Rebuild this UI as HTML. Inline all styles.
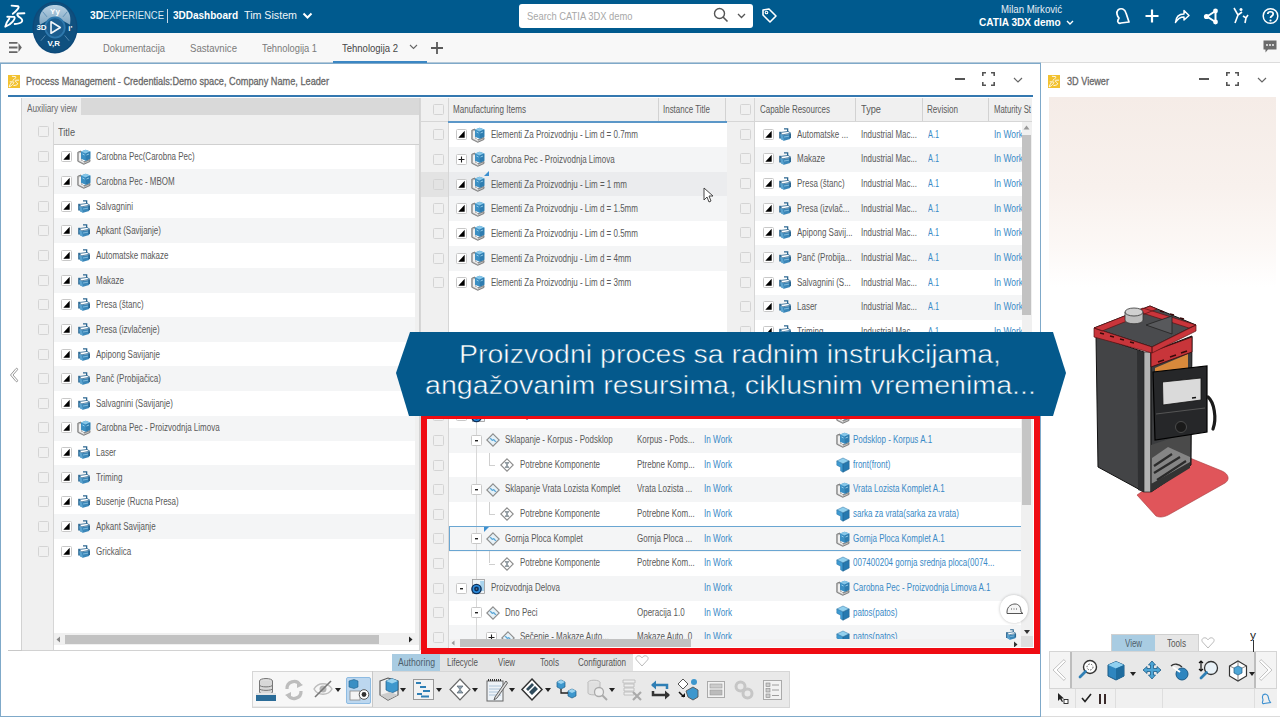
<!DOCTYPE html><html><head><meta charset="utf-8"><style>
html,body{margin:0;padding:0;width:1280px;height:720px;overflow:hidden;background:#fff;position:relative;font-family:"Liberation Sans", sans-serif}
.t{position:absolute;height:20px;line-height:20px;white-space:nowrap;transform-origin:0 50%}
svg{overflow:visible}
</style></head><body>
<svg width="0" height="0" style="position:absolute">
<defs>
<symbol id="prod" viewBox="0 0 14 16">
 <path d="M0.8 3.2 L4 2 L4 11.2 L7 12.8 L13 10.5 L13 12.5 L6.8 15.3 L0.8 12.3Z" fill="#bdbdbd" stroke="#6a6a6a" stroke-width="0.8" stroke-linejoin="round"/>
 <path d="M2 4.5 L2 11.6 L6.8 14 L7 12.8 L4 11.2 L4 3.5Z" fill="#f0f0f0"/>
 <path d="M4 2.6 L8.7 0.8 L13.3 2.6 L13.3 9.8 L8.7 11.8 L4 9.8Z" fill="#3b8fc3"/>
 <path d="M4 2.6 L8.7 4.6 L13.3 2.6 L8.7 0.8Z" fill="#86c6e8"/>
 <path d="M8.7 4.6 L8.7 11.8 L13.3 9.8 L13.3 2.6Z" fill="#2f7db0"/>
 <path d="M5.5 5 L7.5 6 M9.5 6 L12 5" stroke="#a8daf3" stroke-width="0.8"/>
</symbol>
<symbol id="cube" viewBox="0 0 14 16">
 <path d="M0.8 4 L7 1 L13.2 4 L7 7Z" fill="#92d0ee" stroke="#2a73a5" stroke-width="0.5"/>
 <path d="M0.8 4 L7 7 L7 15.2 L4.6 13.8 L4.6 10.2 L0.8 8.2Z" fill="#3f9bd2" stroke="#2a73a5" stroke-width="0.5"/>
 <path d="M7 7 L13.2 4 L13.2 12 L7 15.2Z" fill="#2679b0" stroke="#1f5f8a" stroke-width="0.5"/>
</symbol>
<symbol id="mach" viewBox="0 0 12 13">
 <path d="M5 0.3 H9.3 V4.3 H8 V1.6 H5Z" fill="#2b6690"/>
 <path d="M0.2 3.8 H2.2 V10.5 H0.2Z" fill="#2b6690"/>
 <path d="M1.2 6 L3.8 7.3 L11.8 5.8 L11.2 11 L5 12.8 L2 11.2Z" fill="#3a86b8"/>
 <path d="M3.8 7.3 L5 12.8 L2 11.2 L1.2 6Z" fill="#5ba3cf"/>
 <path d="M1 4.6 L9 3.4 L11.8 5.2 L3.8 6.8Z" fill="#ffffff" stroke="#2b6690" stroke-width="0.8" stroke-linejoin="round"/>
 <path d="M10.4 5.8 H12 V10 H10.4Z" fill="#2b6690"/>
 <path d="M5 9 L10 8.2" stroke="#9fd0ea" stroke-width="0.7"/>
</symbol>
<symbol id="exp" viewBox="0 0 11 11">
 <rect x="0.5" y="0.5" width="10" height="10" rx="1" fill="#fff" stroke="#c8c8c8"/>
 <path d="M2.3 8.7 L8.7 8.7 L8.7 1.8Z" fill="#000"/>
</symbol>
<symbol id="plus" viewBox="0 0 11 11">
 <rect x="0.5" y="0.5" width="10" height="10" rx="1" fill="#fff" stroke="#c8c8c8"/>
 <path d="M2.5 5.5 H8.5 M5.5 2.5 V8.5" stroke="#222" stroke-width="1.1"/>
</symbol>
<symbol id="minus" viewBox="0 0 11 11">
 <rect x="0.5" y="0.5" width="10" height="10" rx="1" fill="#fff" stroke="#c8c8c8"/>
 <rect x="4" y="5" width="3" height="1.4" fill="#222"/>
</symbol>
<symbol id="chk" viewBox="0 0 11 11">
 <rect x="0.5" y="0.5" width="10" height="10" rx="1" fill="none" stroke="#d4d4d4"/>
</symbol>
<symbol id="oper" viewBox="0 0 14 14">
 <path d="M7 0.8 L13.2 7 L7 13.2 L0.8 7Z" fill="#e6f1f7" stroke="#8c8c8c" stroke-width="1.1"/>
 <path d="M4 6 C5 4.5 6 8.5 7 7 C8 5.5 9 9.5 10 8" fill="none" stroke="#5aa6d6" stroke-width="1.3"/>
</symbol>
<symbol id="hour" viewBox="0 0 14 14">
 <path d="M7 0.8 L13.2 7 L7 13.2 L0.8 7Z" fill="#fff" stroke="#8c8c8c" stroke-width="1.1"/>
 <path d="M5 4.5 H9 L7 7 L9 9.5 H5 L7 7Z" fill="#9aa5ad" stroke="#6f7a82" stroke-width="0.6"/>
</symbol>
<symbol id="circ" viewBox="0 0 14 16">
 <rect x="1.5" y="0.5" width="12" height="14" fill="#eef4f8" stroke="#9a9a9a" stroke-width="0.8"/>
 <path d="M9 2 L13 2 L13 12 L10 12Z" fill="#a9d4ee"/>
 <circle cx="5.5" cy="10" r="5.3" fill="#0b2f5a"/>
 <circle cx="5.5" cy="10" r="3.9" fill="#2f8fdf"/>
 <circle cx="5.5" cy="10" r="2.4" fill="#0b2f5a"/>
 <circle cx="5.5" cy="10" r="0.8" fill="#888"/>
</symbol>
</defs></svg><div style="position:absolute;left:0px;top:0px;width:1280px;height:33px;background:#005a8e"></div><svg style="position:absolute;left:0px;top:0px;" width="32" height="32" viewBox="0 0 32 32"><path d="M11.6 5.6 L18.2 6.2 C19.8 7.2 17 10.5 12.8 13.8 M7.3 16.7 L14.3 16.9 C15.8 18.5 11.5 24.5 5.3 26.7 C6 23.5 7.8 20.5 9.3 18.7 M24.4 13.3 L18.2 13.5 C16.3 14.3 17.5 16 20.3 17.8 C24 20.5 22.5 23.5 14.7 24" fill="none" stroke="#fff" stroke-width="1.9" stroke-linecap="round" stroke-linejoin="round"/></svg><div class="t" style="left:90px;top:5.300000000000001px;font-size:11px;color:#ffffff;font-weight:bold;transform:scaleX(0.9245);">3D</div><div class="t" style="left:103px;top:5.300000000000001px;font-size:11px;color:#dbe8f2;font-weight:normal;transform:scaleX(0.8603);">EXPERIENCE</div><div style="position:absolute;left:167px;top:9px;width:1px;height:14px;background:#c5d8e8"></div><div class="t" style="left:173px;top:5.300000000000001px;font-size:11px;color:#ffffff;font-weight:bold;transform:scaleX(0.9089);">3DDashboard</div><div class="t" style="left:244px;top:5.300000000000001px;font-size:11px;color:#eef4f8;font-weight:normal;transform:scaleX(0.9708);">Tim Sistem</div><svg style="position:absolute;left:302px;top:12px;" width="11" height="8" viewBox="0 0 11 8"><path d="M1.5 1.5 L5.5 5.5 L9.5 1.5" fill="none" stroke="#fff" stroke-width="2"/></svg><div style="position:absolute;left:519px;top:4px;width:234px;height:24px;background:#fff;border-radius:3px"></div><div class="t" style="left:527px;top:5.699999999999999px;font-size:11px;color:#a8a8a8;font-weight:normal;transform:scaleX(0.8513);">Search CATIA 3DX demo</div><svg style="position:absolute;left:713px;top:7px;" width="16" height="17" viewBox="0 0 16 17"><circle cx="6.5" cy="6.5" r="5" fill="none" stroke="#555" stroke-width="1.4"/><path d="M10 10 L14.5 14.5" stroke="#555" stroke-width="1.6"/></svg><svg style="position:absolute;left:737px;top:13px;" width="9" height="6" viewBox="0 0 9 6"><path d="M1 1 L4.5 4.5 L8 1" fill="none" stroke="#555" stroke-width="1.3"/></svg><svg style="position:absolute;left:760px;top:7px;" width="18" height="18" viewBox="0 0 18 18"><path d="M3 3 L9 2 L16 9 L10 15 L3 8Z" fill="none" stroke="#fff" stroke-width="1.6" stroke-linejoin="round"/><circle cx="6.5" cy="5.5" r="1.3" fill="none" stroke="#fff" stroke-width="1.1"/></svg><div class="t" style="left:1001px;top:-0.5px;font-size:10px;color:#e6eef5;font-weight:normal;transform:scaleX(0.9631);">Milan Mirković</div><div class="t" style="left:979px;top:11.5px;font-size:11px;color:#ffffff;font-weight:bold;transform:scaleX(0.9148);">CATIA 3DX demo</div><svg style="position:absolute;left:1066px;top:20px;" width="8" height="6" viewBox="0 0 8 6"><path d="M1 1 L4 4 L7 1" fill="none" stroke="#fff" stroke-width="1.4"/></svg><svg style="position:absolute;left:1114px;top:7px;" width="17" height="19" viewBox="0 0 17 19"><path d="M4 3 C7 0.5 11 2 12 6 L14 12 L15 15 L7 16 C5 17 3 15 4 13 L5 11 C3 9 2 5 4 3Z" fill="none" stroke="#fff" stroke-width="1.7" stroke-linejoin="round"/></svg><svg style="position:absolute;left:1145px;top:9px;" width="14" height="14" viewBox="0 0 14 14"><path d="M7 0.5 V13.5 M0.5 7 H13.5" stroke="#fff" stroke-width="2.2"/></svg><svg style="position:absolute;left:1174px;top:8px;" width="16" height="16" viewBox="0 0 16 16"><path d="M1.5 14.5 C2 8 6 6 10 6 L10 2.5 L15 7.5 L10 12 L10 9 C6 9 3.5 11 1.5 14.5Z" fill="none" stroke="#fff" stroke-width="1.5" stroke-linejoin="round"/></svg><svg style="position:absolute;left:1203px;top:8px;" width="17" height="17" viewBox="0 0 17 17"><path d="M4 8.5 L12.5 3 L12.5 14 Z" fill="none" stroke="#fff" stroke-width="2"/><circle cx="3.5" cy="8.5" r="2.6" fill="#fff"/><circle cx="12.5" cy="3" r="2.4" fill="#fff"/><circle cx="12.5" cy="14" r="2.4" fill="#fff"/></svg><svg style="position:absolute;left:1233px;top:7px;" width="16" height="18" viewBox="0 0 16 18"><path d="M1 1 L5 8 L2 16 M9 5 L5 8 M10 9 L13 11 L15 8 M13 11 L12 16" fill="none" stroke="#fff" stroke-width="1.6"/><circle cx="8" cy="2.5" r="1.5" fill="#fff"/></svg><svg style="position:absolute;left:1262px;top:7px;" width="17" height="18" viewBox="0 0 17 18"><circle cx="8.5" cy="9" r="7.3" fill="none" stroke="#fff" stroke-width="1.5"/><path d="M5.8 7 C5.8 4 11.2 4 11.2 7 C11.2 9 8.5 9 8.5 11" fill="none" stroke="#fff" stroke-width="1.7"/><circle cx="8.5" cy="13.5" r="1.1" fill="#fff"/></svg><div style="position:absolute;left:0px;top:33px;width:1280px;height:30px;background:#f8f8f8"></div><div style="position:absolute;left:0px;top:62px;width:1280px;height:2px;background:#b3c8d8"></div><svg style="position:absolute;left:8px;top:41px;" width="14" height="13" viewBox="0 0 14 13"><path d="M1 1.8 H9.5 M1 6.5 H9.5 M1 11.2 H9.5" stroke="#666" stroke-width="1.8"/><path d="M10.5 2 L13.8 6.5 L10.5 11Z" fill="#666"/></svg><div class="t" style="left:103px;top:37.5px;font-size:11px;color:#7b7b7b;font-weight:normal;transform:scaleX(0.8522);">Dokumentacija</div><div class="t" style="left:190px;top:37.5px;font-size:11px;color:#7b7b7b;font-weight:normal;transform:scaleX(0.8735);">Sastavnice</div><div class="t" style="left:262px;top:37.5px;font-size:11px;color:#7b7b7b;font-weight:normal;transform:scaleX(0.8484);">Tehnologija 1</div><div class="t" style="left:342px;top:37.5px;font-size:11px;color:#474747;font-weight:normal;transform:scaleX(0.8638);">Tehnologija 2</div><svg style="position:absolute;left:409px;top:44px;" width="9" height="6" viewBox="0 0 9 6"><path d="M1 1 L4.5 4.5 L8 1" fill="none" stroke="#666" stroke-width="1.1"/></svg><div style="position:absolute;left:333px;top:61px;width:94px;height:2px;background:#3b87c4"></div><svg style="position:absolute;left:431px;top:42px;" width="12" height="12" viewBox="0 0 12 12"><path d="M6 0 V12 M0 6 H12" stroke="#5a5a5a" stroke-width="1.8"/></svg><svg style="position:absolute;left:1263px;top:40px;" width="14" height="14" viewBox="0 0 14 14"><path d="M0.5 0.5 H13.5 V9.5 H5 L2.5 12.5 V9.5 H0.5Z" fill="#6b6b6b"/><circle cx="4" cy="5" r="0.9" fill="#fff"/><circle cx="7" cy="5" r="0.9" fill="#fff"/><circle cx="10" cy="5" r="0.9" fill="#fff"/></svg><svg style="position:absolute;left:32px;top:1px" width="46" height="53" viewBox="0 0 52 60" preserveAspectRatio="none"><ellipse cx="26" cy="30" rx="25.5" ry="29.5" fill="#0d4a7a"/><ellipse cx="26" cy="30" rx="24" ry="28" fill="#0f507f"/><defs><linearGradient id="capg" x1="0" y1="0" x2="0" y2="1"><stop offset="0" stop-color="#b9d1e3"/><stop offset="1" stop-color="#7fa6c2"/></linearGradient></defs><path d="M9 27 C6 11 16 4.5 26 4.5 C36 4.5 46 11 43 27 L36 23 C32 19 20 19 16 23Z" fill="url(#capg)"/><ellipse cx="26" cy="30" rx="11" ry="11.5" fill="#1b5d8f" stroke="#2e78ad" stroke-width="2"/><path d="M21.5 23.5 L32 30 L21.5 36.5Z" fill="none" stroke="#f2f6fa" stroke-width="1.8" stroke-linejoin="round"/><path d="M10 45 L15 39 M42 45 L37 39 M12 12 L17 18 M40 12 L35 18" stroke="#5b8db3" stroke-width="1"/><text x="5" y="33" font-family="Liberation Sans" font-size="9" font-weight="bold" fill="#fff">3D</text><text x="41" y="34" font-family="Liberation Sans" font-size="9" font-weight="bold" fill="#fff">i'</text><text x="17.5" y="51.5" font-family="Liberation Sans" font-size="9" font-weight="bold" fill="#fff">V,R</text><text x="20.5" y="15" font-family="Liberation Sans" font-size="9" font-weight="bold" fill="#fff">Yy</text></svg><div style="position:absolute;left:0px;top:63px;width:1041px;height:654px;background:#fff;border:1px solid #7fa9c9;box-sizing:border-box"></div><div style="position:absolute;left:8px;top:75px;width:12px;height:13px;background:#f2c12e"></div><svg style="position:absolute;left:8px;top:75px;" width="12" height="13" viewBox="3 3 24 26"><path d="M11.6 5.6 L18.2 6.2 C19.8 7.2 17 10.5 12.8 13.8 M7.3 16.7 L14.3 16.9 C15.8 18.5 11.5 24.5 5.3 26.7 C6 23.5 7.8 20.5 9.3 18.7 M24.4 13.3 L18.2 13.5 C16.3 14.3 17.5 16 20.3 17.8 C24 20.5 22.5 23.5 14.7 24" fill="none" stroke="#fff" stroke-width="1.8" stroke-linecap="round" stroke-linejoin="round"/></svg><div class="t" style="left:26px;top:71.0px;font-size:11px;color:#686868;font-weight:normal;transform:scaleX(0.8343);-webkit-text-stroke:0.3px #686868">Process Management - Credentials:Demo space, Company Name, Leader</div><div style="position:absolute;left:955px;top:78px;width:10px;height:2px;background:#555"></div><svg style="position:absolute;left:982px;top:72px;" width="13" height="14" viewBox="0 0 13 14"><path d="M0.8 4 V0.8 H4 M9 0.8 H12.2 V4 M12.2 10 V13.2 H9 M4 13.2 H0.8 V10" fill="none" stroke="#555" stroke-width="1.6"/></svg><svg style="position:absolute;left:1013px;top:77px;" width="10" height="6" viewBox="0 0 10 6"><path d="M1 1 L5 5 L9 1" fill="none" stroke="#666" stroke-width="1.2"/></svg><div style="position:absolute;left:8px;top:95px;width:1025px;height:2px;background:#3478b0"></div><div style="position:absolute;left:21px;top:98px;width:399px;height:553px;background:#fff;border:1px solid #d2d2d2;border-top:none;box-sizing:border-box"></div><div style="position:absolute;left:22px;top:98px;width:397px;height:17px;background:#d9d9d9"></div><div style="position:absolute;left:22px;top:98px;width:59px;height:17px;background:#efefef"></div><div class="t" style="left:27px;top:98.5px;font-size:10px;color:#6a6a6a;font-weight:normal;transform:scaleX(0.8255);">Auxiliary view</div><div style="position:absolute;left:22px;top:115px;width:397px;height:29px;background:#f0f0f0"></div><div style="position:absolute;left:22px;top:144px;width:397px;height:1px;background:#d0d0d0"></div><div style="position:absolute;left:22px;top:115px;width:32px;height:535px;background:#f0f0f0"></div><div style="position:absolute;left:53px;top:122px;width:1px;height:528px;background:#d6d6d6"></div><svg style="position:absolute;left:38px;top:126px" width="11" height="11"><use href="#chk"/></svg><div class="t" style="left:58px;top:122.5px;font-size:10px;color:#5a5a5a;font-weight:normal;transform:scaleX(0.9179);">Title</div><svg style="position:absolute;left:38px;top:151px" width="11" height="11"><use href="#chk"/></svg><svg style="position:absolute;left:61px;top:151px" width="11" height="11"><use href="#exp"/></svg><svg style="position:absolute;left:77px;top:149px" width="14" height="16"><use href="#prod"/></svg><div class="t" style="left:96px;top:147.325px;font-size:10px;color:#5a5a5a;font-weight:normal;transform:scaleX(0.8000);">Carobna Pec(Carobna Pec)</div><div style="position:absolute;left:54px;top:169px;width:361px;height:25px;background:#f4f5f6"></div><svg style="position:absolute;left:38px;top:176px" width="11" height="11"><use href="#chk"/></svg><svg style="position:absolute;left:61px;top:176px" width="11" height="11"><use href="#exp"/></svg><svg style="position:absolute;left:77px;top:173px" width="14" height="16"><use href="#prod"/></svg><div class="t" style="left:96px;top:171.975px;font-size:10px;color:#5a5a5a;font-weight:normal;transform:scaleX(0.8000);">Carobna Pec - MBOM</div><svg style="position:absolute;left:38px;top:201px" width="11" height="11"><use href="#chk"/></svg><svg style="position:absolute;left:61px;top:201px" width="11" height="11"><use href="#exp"/></svg><svg style="position:absolute;left:78px;top:200px" width="12" height="13"><use href="#mach"/></svg><div class="t" style="left:96px;top:196.625px;font-size:10px;color:#5a5a5a;font-weight:normal;transform:scaleX(0.8000);">Salvagnini</div><div style="position:absolute;left:54px;top:218px;width:361px;height:25px;background:#f4f5f6"></div><svg style="position:absolute;left:38px;top:225px" width="11" height="11"><use href="#chk"/></svg><svg style="position:absolute;left:61px;top:225px" width="11" height="11"><use href="#exp"/></svg><svg style="position:absolute;left:78px;top:224px" width="12" height="13"><use href="#mach"/></svg><div class="t" style="left:96px;top:221.27499999999998px;font-size:10px;color:#5a5a5a;font-weight:normal;transform:scaleX(0.8000);">Apkant (Savijanje)</div><svg style="position:absolute;left:38px;top:250px" width="11" height="11"><use href="#chk"/></svg><svg style="position:absolute;left:61px;top:250px" width="11" height="11"><use href="#exp"/></svg><svg style="position:absolute;left:78px;top:249px" width="12" height="13"><use href="#mach"/></svg><div class="t" style="left:96px;top:245.92499999999998px;font-size:10px;color:#5a5a5a;font-weight:normal;transform:scaleX(0.8000);">Automatske makaze</div><div style="position:absolute;left:54px;top:268px;width:361px;height:25px;background:#f4f5f6"></div><svg style="position:absolute;left:38px;top:275px" width="11" height="11"><use href="#chk"/></svg><svg style="position:absolute;left:61px;top:275px" width="11" height="11"><use href="#exp"/></svg><svg style="position:absolute;left:78px;top:274px" width="12" height="13"><use href="#mach"/></svg><div class="t" style="left:96px;top:270.575px;font-size:10px;color:#5a5a5a;font-weight:normal;transform:scaleX(0.8000);">Makaze</div><svg style="position:absolute;left:38px;top:299px" width="11" height="11"><use href="#chk"/></svg><svg style="position:absolute;left:61px;top:299px" width="11" height="11"><use href="#exp"/></svg><svg style="position:absolute;left:78px;top:298px" width="12" height="13"><use href="#mach"/></svg><div class="t" style="left:96px;top:295.22499999999997px;font-size:10px;color:#5a5a5a;font-weight:normal;transform:scaleX(0.8000);">Presa (štanc)</div><div style="position:absolute;left:54px;top:317px;width:361px;height:25px;background:#f4f5f6"></div><svg style="position:absolute;left:38px;top:324px" width="11" height="11"><use href="#chk"/></svg><svg style="position:absolute;left:61px;top:324px" width="11" height="11"><use href="#exp"/></svg><svg style="position:absolute;left:78px;top:323px" width="12" height="13"><use href="#mach"/></svg><div class="t" style="left:96px;top:319.87499999999994px;font-size:10px;color:#5a5a5a;font-weight:normal;transform:scaleX(0.8000);">Presa (izvlačenje)</div><svg style="position:absolute;left:38px;top:349px" width="11" height="11"><use href="#chk"/></svg><svg style="position:absolute;left:61px;top:349px" width="11" height="11"><use href="#exp"/></svg><svg style="position:absolute;left:78px;top:348px" width="12" height="13"><use href="#mach"/></svg><div class="t" style="left:96px;top:344.525px;font-size:10px;color:#5a5a5a;font-weight:normal;transform:scaleX(0.8000);">Apipong Savijanje</div><div style="position:absolute;left:54px;top:366px;width:361px;height:25px;background:#f4f5f6"></div><svg style="position:absolute;left:38px;top:373px" width="11" height="11"><use href="#chk"/></svg><svg style="position:absolute;left:61px;top:373px" width="11" height="11"><use href="#exp"/></svg><svg style="position:absolute;left:78px;top:372px" width="12" height="13"><use href="#mach"/></svg><div class="t" style="left:96px;top:369.175px;font-size:10px;color:#5a5a5a;font-weight:normal;transform:scaleX(0.8000);">Panč (Probijačica)</div><svg style="position:absolute;left:38px;top:398px" width="11" height="11"><use href="#chk"/></svg><svg style="position:absolute;left:61px;top:398px" width="11" height="11"><use href="#exp"/></svg><svg style="position:absolute;left:78px;top:397px" width="12" height="13"><use href="#mach"/></svg><div class="t" style="left:96px;top:393.825px;font-size:10px;color:#5a5a5a;font-weight:normal;transform:scaleX(0.8000);">Salvagnini (Savijanje)</div><div style="position:absolute;left:54px;top:416px;width:361px;height:25px;background:#f4f5f6"></div><svg style="position:absolute;left:38px;top:422px" width="11" height="11"><use href="#chk"/></svg><svg style="position:absolute;left:61px;top:422px" width="11" height="11"><use href="#exp"/></svg><svg style="position:absolute;left:77px;top:420px" width="14" height="16"><use href="#prod"/></svg><div class="t" style="left:96px;top:418.47499999999997px;font-size:10px;color:#5a5a5a;font-weight:normal;transform:scaleX(0.8000);">Carobna Pec - Proizvodnja Limova</div><svg style="position:absolute;left:38px;top:447px" width="11" height="11"><use href="#chk"/></svg><svg style="position:absolute;left:61px;top:447px" width="11" height="11"><use href="#exp"/></svg><svg style="position:absolute;left:78px;top:446px" width="12" height="13"><use href="#mach"/></svg><div class="t" style="left:96px;top:443.12499999999994px;font-size:10px;color:#5a5a5a;font-weight:normal;transform:scaleX(0.8000);">Laser</div><div style="position:absolute;left:54px;top:465px;width:361px;height:25px;background:#f4f5f6"></div><svg style="position:absolute;left:38px;top:472px" width="11" height="11"><use href="#chk"/></svg><svg style="position:absolute;left:61px;top:472px" width="11" height="11"><use href="#exp"/></svg><svg style="position:absolute;left:78px;top:471px" width="12" height="13"><use href="#mach"/></svg><div class="t" style="left:96px;top:467.775px;font-size:10px;color:#5a5a5a;font-weight:normal;transform:scaleX(0.8000);">Triming</div><svg style="position:absolute;left:38px;top:496px" width="11" height="11"><use href="#chk"/></svg><svg style="position:absolute;left:61px;top:496px" width="11" height="11"><use href="#exp"/></svg><svg style="position:absolute;left:78px;top:495px" width="12" height="13"><use href="#mach"/></svg><div class="t" style="left:96px;top:492.42499999999995px;font-size:10px;color:#5a5a5a;font-weight:normal;transform:scaleX(0.8000);">Busenje (Rucna Presa)</div><div style="position:absolute;left:54px;top:514px;width:361px;height:25px;background:#f4f5f6"></div><svg style="position:absolute;left:38px;top:521px" width="11" height="11"><use href="#chk"/></svg><svg style="position:absolute;left:61px;top:521px" width="11" height="11"><use href="#exp"/></svg><svg style="position:absolute;left:78px;top:520px" width="12" height="13"><use href="#mach"/></svg><div class="t" style="left:96px;top:517.075px;font-size:10px;color:#5a5a5a;font-weight:normal;transform:scaleX(0.8000);">Apkant Savijanje</div><svg style="position:absolute;left:38px;top:546px" width="11" height="11"><use href="#chk"/></svg><svg style="position:absolute;left:61px;top:546px" width="11" height="11"><use href="#exp"/></svg><svg style="position:absolute;left:78px;top:545px" width="12" height="13"><use href="#mach"/></svg><div class="t" style="left:96px;top:541.725px;font-size:10px;color:#5a5a5a;font-weight:normal;transform:scaleX(0.8000);">Grickalica</div><div style="position:absolute;left:415px;top:145px;width:4px;height:488px;background:#f0f0f0"></div><div style="position:absolute;left:54px;top:633px;width:365px;height:12px;background:#f0f0f0"></div><div style="position:absolute;left:65px;top:635px;width:314px;height:9px;background:#c2c2c2"></div><svg style="position:absolute;left:56px;top:636px;" width="5" height="7" viewBox="0 0 5 7"><path d="M4 0.5 L0.5 3.5 L4 6.5Z" fill="#888"/></svg><svg style="position:absolute;left:408px;top:636px;" width="5" height="7" viewBox="0 0 5 7"><path d="M1 0.5 L4.5 3.5 L1 6.5Z" fill="#222"/></svg><div style="position:absolute;left:8px;top:650px;width:14px;height:1px;background:#c8c8c8"></div><svg style="position:absolute;left:9px;top:367px;" width="10" height="16" viewBox="0 0 10 16"><path d="M7 1.5 C8 0.8 9 1.8 8.5 2.8 L4 8 L8.5 13.2 C9 14.2 8 15.2 7 14.5 L1.5 8Z" fill="#fff" stroke="#9a9a9a" stroke-width="1"/></svg><div style="position:absolute;left:420px;top:98px;width:307px;height:552px;background:#fff"></div><div style="position:absolute;left:420px;top:98px;width:28px;height:552px;background:#f0f0f0"></div><div style="position:absolute;left:420px;top:98px;width:1px;height:552px;background:#d6d6d6"></div><div style="position:absolute;left:448px;top:98px;width:279px;height:24px;background:#f0f0f0"></div><div style="position:absolute;left:448px;top:98px;width:1px;height:552px;background:#d6d6d6"></div><div style="position:absolute;left:658px;top:98px;width:1px;height:24px;background:#d2d2d2"></div><div style="position:absolute;left:725px;top:98px;width:1px;height:24px;background:#d2d2d2"></div><div style="position:absolute;left:420px;top:121px;width:28px;height:1px;background:#d6d6d6"></div><div style="position:absolute;left:448px;top:121px;width:279px;height:2px;background:#5b97c8"></div><svg style="position:absolute;left:433px;top:104px" width="11" height="11"><use href="#chk"/></svg><div class="t" style="left:453px;top:100.0px;font-size:10px;color:#5a5a5a;font-weight:normal;transform:scaleX(0.8058);">Manufacturing Items</div><div class="t" style="left:663px;top:100.0px;font-size:10px;color:#5a5a5a;font-weight:normal;transform:scaleX(0.7952);">Instance Title</div><svg style="position:absolute;left:433px;top:129px" width="11" height="11"><use href="#chk"/></svg><svg style="position:absolute;left:456px;top:129px" width="11" height="11"><use href="#exp"/></svg><svg style="position:absolute;left:471px;top:127px" width="14" height="16"><use href="#prod"/></svg><div class="t" style="left:491px;top:125.32499999999999px;font-size:10px;color:#5a5a5a;font-weight:normal;transform:scaleX(0.8000);">Elementi Za Proizvodnju - Lim d = 0.7mm</div><div style="position:absolute;left:449px;top:147px;width:278px;height:25px;background:#f4f5f6"></div><svg style="position:absolute;left:433px;top:154px" width="11" height="11"><use href="#chk"/></svg><svg style="position:absolute;left:456px;top:154px" width="11" height="11"><use href="#plus"/></svg><svg style="position:absolute;left:471px;top:151px" width="14" height="16"><use href="#prod"/></svg><div class="t" style="left:491px;top:149.975px;font-size:10px;color:#5a5a5a;font-weight:normal;transform:scaleX(0.8000);">Carobna Pec - Proizvodnja Limova</div><div style="position:absolute;left:421px;top:172px;width:27px;height:25px;background:#e3e3e3"></div><div style="position:absolute;left:449px;top:172px;width:278px;height:25px;background:#ebecee"></div><svg style="position:absolute;left:433px;top:179px" width="11" height="11"><use href="#chk"/></svg><svg style="position:absolute;left:456px;top:179px" width="11" height="11"><use href="#exp"/></svg><svg style="position:absolute;left:471px;top:176px" width="14" height="16"><use href="#prod"/></svg><div class="t" style="left:491px;top:174.625px;font-size:10px;color:#5a5a5a;font-weight:normal;transform:scaleX(0.8000);">Elementi Za Proizvodnju - Lim = 1 mm</div><div style="position:absolute;left:449px;top:196px;width:278px;height:25px;background:#f4f5f6"></div><svg style="position:absolute;left:433px;top:203px" width="11" height="11"><use href="#chk"/></svg><svg style="position:absolute;left:456px;top:203px" width="11" height="11"><use href="#exp"/></svg><svg style="position:absolute;left:471px;top:201px" width="14" height="16"><use href="#prod"/></svg><div class="t" style="left:491px;top:199.27499999999998px;font-size:10px;color:#5a5a5a;font-weight:normal;transform:scaleX(0.8000);">Elementi Za Proizvodnju - Lim d = 1.5mm</div><svg style="position:absolute;left:433px;top:228px" width="11" height="11"><use href="#chk"/></svg><svg style="position:absolute;left:456px;top:228px" width="11" height="11"><use href="#exp"/></svg><svg style="position:absolute;left:471px;top:225px" width="14" height="16"><use href="#prod"/></svg><div class="t" style="left:491px;top:223.92499999999998px;font-size:10px;color:#5a5a5a;font-weight:normal;transform:scaleX(0.8000);">Elementi Za Proizvodnju - Lim d = 0.5mm</div><div style="position:absolute;left:449px;top:246px;width:278px;height:25px;background:#f4f5f6"></div><svg style="position:absolute;left:433px;top:253px" width="11" height="11"><use href="#chk"/></svg><svg style="position:absolute;left:456px;top:253px" width="11" height="11"><use href="#exp"/></svg><svg style="position:absolute;left:471px;top:250px" width="14" height="16"><use href="#prod"/></svg><div class="t" style="left:491px;top:248.575px;font-size:10px;color:#5a5a5a;font-weight:normal;transform:scaleX(0.8000);">Elementi Za Proizvodnju - Lim d = 4mm</div><svg style="position:absolute;left:433px;top:277px" width="11" height="11"><use href="#chk"/></svg><svg style="position:absolute;left:456px;top:277px" width="11" height="11"><use href="#exp"/></svg><svg style="position:absolute;left:471px;top:275px" width="14" height="16"><use href="#prod"/></svg><div class="t" style="left:491px;top:273.22499999999997px;font-size:10px;color:#5a5a5a;font-weight:normal;transform:scaleX(0.8000);">Elementi Za Proizvodnju - Lim d = 3mm</div><svg style="position:absolute;left:484px;top:171px;" width="5" height="5" viewBox="0 0 5 5"><path d="M0 5 L5 0 L5 5Z" fill="#3b8fd0"/></svg><svg style="position:absolute;left:703px;top:187px;" width="10" height="16" viewBox="0 0 10 16"><path d="M1 1 L1 13 L4 10 L6 15 L8 14 L6 9 L10 9Z" fill="#fff" stroke="#333" stroke-width="0.9"/></svg><div style="position:absolute;left:727px;top:98px;width:306px;height:552px;background:#fff"></div><div style="position:absolute;left:727px;top:98px;width:27px;height:552px;background:#f0f0f0"></div><div style="position:absolute;left:754px;top:98px;width:278px;height:23px;background:#f0f0f0"></div><div style="position:absolute;left:727px;top:121px;width:305px;height:1px;background:#d6d6d6"></div><div style="position:absolute;left:754px;top:98px;width:1px;height:552px;background:#d6d6d6"></div><div style="position:absolute;left:855px;top:98px;width:1px;height:23px;background:#d2d2d2"></div><div style="position:absolute;left:922px;top:98px;width:1px;height:23px;background:#d2d2d2"></div><div style="position:absolute;left:988px;top:98px;width:1px;height:23px;background:#d2d2d2"></div><svg style="position:absolute;left:740px;top:104px" width="11" height="11"><use href="#chk"/></svg><div class="t" style="left:760px;top:100.0px;font-size:10px;color:#5a5a5a;font-weight:normal;transform:scaleX(0.7970);">Capable Resources</div><div class="t" style="left:861px;top:100.0px;font-size:10px;color:#5a5a5a;font-weight:normal;transform:scaleX(0.9225);">Type</div><div class="t" style="left:927px;top:100.0px;font-size:10px;color:#5a5a5a;font-weight:normal;transform:scaleX(0.8084);">Revision</div><div class="t" style="left:994px;top:100.0px;font-size:10px;color:#5a5a5a;font-weight:normal;transform:scaleX(0.7743);clip-path:inset(0 0 0 0)">Maturity St</div><svg style="position:absolute;left:740px;top:129px" width="11" height="11"><use href="#chk"/></svg><svg style="position:absolute;left:763px;top:129px" width="11" height="11"><use href="#exp"/></svg><svg style="position:absolute;left:779px;top:128px" width="12" height="13"><use href="#mach"/></svg><div class="t" style="left:797px;top:124.82499999999999px;font-size:10px;color:#5a5a5a;font-weight:normal;transform:scaleX(0.8000);">Automatske ...</div><div class="t" style="left:861px;top:124.82499999999999px;font-size:10px;color:#5a5a5a;font-weight:normal;transform:scaleX(0.7934);">Industrial Mac...</div><div class="t" style="left:928px;top:124.82499999999999px;font-size:10px;color:#3a8ac6;font-weight:normal;transform:scaleX(0.7329);">A.1</div><div class="t" style="left:994px;top:124.82499999999999px;font-size:10px;color:#3a8ac6;font-weight:normal;transform:scaleX(0.8463);">In Work</div><div style="position:absolute;left:755px;top:147px;width:267px;height:25px;background:#f4f5f6"></div><svg style="position:absolute;left:740px;top:153px" width="11" height="11"><use href="#chk"/></svg><svg style="position:absolute;left:763px;top:153px" width="11" height="11"><use href="#exp"/></svg><svg style="position:absolute;left:779px;top:152px" width="12" height="13"><use href="#mach"/></svg><div class="t" style="left:797px;top:149.475px;font-size:10px;color:#5a5a5a;font-weight:normal;transform:scaleX(0.8000);">Makaze</div><div class="t" style="left:861px;top:149.475px;font-size:10px;color:#5a5a5a;font-weight:normal;transform:scaleX(0.7934);">Industrial Mac...</div><div class="t" style="left:928px;top:149.475px;font-size:10px;color:#3a8ac6;font-weight:normal;transform:scaleX(0.7329);">A.1</div><div class="t" style="left:994px;top:149.475px;font-size:10px;color:#3a8ac6;font-weight:normal;transform:scaleX(0.8463);">In Work</div><svg style="position:absolute;left:740px;top:178px" width="11" height="11"><use href="#chk"/></svg><svg style="position:absolute;left:763px;top:178px" width="11" height="11"><use href="#exp"/></svg><svg style="position:absolute;left:779px;top:177px" width="12" height="13"><use href="#mach"/></svg><div class="t" style="left:797px;top:174.125px;font-size:10px;color:#5a5a5a;font-weight:normal;transform:scaleX(0.8000);">Presa (štanc)</div><div class="t" style="left:861px;top:174.125px;font-size:10px;color:#5a5a5a;font-weight:normal;transform:scaleX(0.7934);">Industrial Mac...</div><div class="t" style="left:928px;top:174.125px;font-size:10px;color:#3a8ac6;font-weight:normal;transform:scaleX(0.7329);">A.1</div><div class="t" style="left:994px;top:174.125px;font-size:10px;color:#3a8ac6;font-weight:normal;transform:scaleX(0.8463);">In Work</div><div style="position:absolute;left:755px;top:196px;width:267px;height:25px;background:#f4f5f6"></div><svg style="position:absolute;left:740px;top:203px" width="11" height="11"><use href="#chk"/></svg><svg style="position:absolute;left:763px;top:203px" width="11" height="11"><use href="#exp"/></svg><svg style="position:absolute;left:779px;top:202px" width="12" height="13"><use href="#mach"/></svg><div class="t" style="left:797px;top:198.77499999999998px;font-size:10px;color:#5a5a5a;font-weight:normal;transform:scaleX(0.8000);">Presa (izvlač...</div><div class="t" style="left:861px;top:198.77499999999998px;font-size:10px;color:#5a5a5a;font-weight:normal;transform:scaleX(0.7934);">Industrial Mac...</div><div class="t" style="left:928px;top:198.77499999999998px;font-size:10px;color:#3a8ac6;font-weight:normal;transform:scaleX(0.7329);">A.1</div><div class="t" style="left:994px;top:198.77499999999998px;font-size:10px;color:#3a8ac6;font-weight:normal;transform:scaleX(0.8463);">In Work</div><svg style="position:absolute;left:740px;top:227px" width="11" height="11"><use href="#chk"/></svg><svg style="position:absolute;left:763px;top:227px" width="11" height="11"><use href="#exp"/></svg><svg style="position:absolute;left:779px;top:226px" width="12" height="13"><use href="#mach"/></svg><div class="t" style="left:797px;top:223.42499999999998px;font-size:10px;color:#5a5a5a;font-weight:normal;transform:scaleX(0.8000);">Apipong Savij...</div><div class="t" style="left:861px;top:223.42499999999998px;font-size:10px;color:#5a5a5a;font-weight:normal;transform:scaleX(0.7934);">Industrial Mac...</div><div class="t" style="left:928px;top:223.42499999999998px;font-size:10px;color:#3a8ac6;font-weight:normal;transform:scaleX(0.7329);">A.1</div><div class="t" style="left:994px;top:223.42499999999998px;font-size:10px;color:#3a8ac6;font-weight:normal;transform:scaleX(0.8463);">In Work</div><div style="position:absolute;left:755px;top:245px;width:267px;height:25px;background:#f4f5f6"></div><svg style="position:absolute;left:740px;top:252px" width="11" height="11"><use href="#chk"/></svg><svg style="position:absolute;left:763px;top:252px" width="11" height="11"><use href="#exp"/></svg><svg style="position:absolute;left:779px;top:251px" width="12" height="13"><use href="#mach"/></svg><div class="t" style="left:797px;top:248.075px;font-size:10px;color:#5a5a5a;font-weight:normal;transform:scaleX(0.8000);">Panč (Probija...</div><div class="t" style="left:861px;top:248.075px;font-size:10px;color:#5a5a5a;font-weight:normal;transform:scaleX(0.7934);">Industrial Mac...</div><div class="t" style="left:928px;top:248.075px;font-size:10px;color:#3a8ac6;font-weight:normal;transform:scaleX(0.7329);">A.1</div><div class="t" style="left:994px;top:248.075px;font-size:10px;color:#3a8ac6;font-weight:normal;transform:scaleX(0.8463);">In Work</div><svg style="position:absolute;left:740px;top:277px" width="11" height="11"><use href="#chk"/></svg><svg style="position:absolute;left:763px;top:277px" width="11" height="11"><use href="#exp"/></svg><svg style="position:absolute;left:779px;top:276px" width="12" height="13"><use href="#mach"/></svg><div class="t" style="left:797px;top:272.72499999999997px;font-size:10px;color:#5a5a5a;font-weight:normal;transform:scaleX(0.8000);">Salvagnini (S...</div><div class="t" style="left:861px;top:272.72499999999997px;font-size:10px;color:#5a5a5a;font-weight:normal;transform:scaleX(0.7934);">Industrial Mac...</div><div class="t" style="left:928px;top:272.72499999999997px;font-size:10px;color:#3a8ac6;font-weight:normal;transform:scaleX(0.7329);">A.1</div><div class="t" style="left:994px;top:272.72499999999997px;font-size:10px;color:#3a8ac6;font-weight:normal;transform:scaleX(0.8463);">In Work</div><div style="position:absolute;left:755px;top:295px;width:267px;height:25px;background:#f4f5f6"></div><svg style="position:absolute;left:740px;top:301px" width="11" height="11"><use href="#chk"/></svg><svg style="position:absolute;left:763px;top:301px" width="11" height="11"><use href="#exp"/></svg><svg style="position:absolute;left:779px;top:300px" width="12" height="13"><use href="#mach"/></svg><div class="t" style="left:797px;top:297.37499999999994px;font-size:10px;color:#5a5a5a;font-weight:normal;transform:scaleX(0.8000);">Laser</div><div class="t" style="left:861px;top:297.37499999999994px;font-size:10px;color:#5a5a5a;font-weight:normal;transform:scaleX(0.7934);">Industrial Mac...</div><div class="t" style="left:928px;top:297.37499999999994px;font-size:10px;color:#3a8ac6;font-weight:normal;transform:scaleX(0.7329);">A.1</div><div class="t" style="left:994px;top:297.37499999999994px;font-size:10px;color:#3a8ac6;font-weight:normal;transform:scaleX(0.8463);">In Work</div><svg style="position:absolute;left:740px;top:326px" width="11" height="11"><use href="#chk"/></svg><svg style="position:absolute;left:763px;top:326px" width="11" height="11"><use href="#exp"/></svg><svg style="position:absolute;left:779px;top:325px" width="12" height="13"><use href="#mach"/></svg><div class="t" style="left:797px;top:322.025px;font-size:10px;color:#5a5a5a;font-weight:normal;transform:scaleX(0.8000);">Triming</div><div class="t" style="left:861px;top:322.025px;font-size:10px;color:#5a5a5a;font-weight:normal;transform:scaleX(0.7934);">Industrial Mac...</div><div class="t" style="left:928px;top:322.025px;font-size:10px;color:#3a8ac6;font-weight:normal;transform:scaleX(0.7329);">A.1</div><div class="t" style="left:994px;top:322.025px;font-size:10px;color:#3a8ac6;font-weight:normal;transform:scaleX(0.8463);">In Work</div><div style="position:absolute;left:1022px;top:122px;width:10px;height:528px;background:#f0f0f0"></div><div style="position:absolute;left:1022px;top:135px;width:9px;height:180px;background:#c2c2c2"></div><svg style="position:absolute;left:1023px;top:125px;" width="7" height="5" viewBox="0 0 7 5"><path d="M0.5 4.5 L3.5 0.5 L6.5 4.5Z" fill="#999"/></svg><div style="position:absolute;left:1032px;top:98px;width:1px;height:552px;background:#fff"></div><div style="position:absolute;left:427px;top:400px;width:607px;height:248px;background:#fff"></div><div style="position:absolute;left:427px;top:400px;width:21px;height:248px;background:#f0f0f0"></div><div style="position:absolute;left:448px;top:400px;width:1px;height:248px;background:#d6d6d6"></div><div style="position:absolute;left:427px;top:419px;width:607px;height:228px;overflow:hidden"><div style="position:absolute;left:0px;top:0px;width:21px;height:228px;background:#f0f0f0"></div><div style="position:absolute;left:21px;top:0px;width:1px;height:228px;background:#d6d6d6"></div><div style="position:absolute;left:22px;top:9px;width:573px;height:25px;background:#f4f5f6"></div><div style="position:absolute;left:22px;top:58px;width:573px;height:25px;background:#f4f5f6"></div><div style="position:absolute;left:22px;top:108px;width:573px;height:25px;background:#f4f5f6"></div><div style="position:absolute;left:22px;top:157px;width:573px;height:25px;background:#f4f5f6"></div><div style="position:absolute;left:22px;top:206px;width:573px;height:25px;background:#f4f5f6"></div><div style="position:absolute;left:49px;top:0px;width:1px;height:160px;background:#d8d8d8"></div><div style="position:absolute;left:49px;top:178px;width:1px;height:50px;background:#d8d8d8"></div><svg style="position:absolute;left:6px;top:-9px" width="11" height="11"><use href="#chk"/></svg><svg style="position:absolute;left:29px;top:-9px" width="11" height="11"><use href="#minus"/></svg><svg style="position:absolute;left:44px;top:-12px" width="14" height="16"><use href="#circ"/></svg><div class="t" style="left:64px;top:-13.575000000000035px;font-size:10px;color:#5a5a5a;font-weight:normal;transform:scaleX(0.8000);">Proizvodnja</div><svg style="position:absolute;left:409px;top:-11px" width="14" height="16"><use href="#prod"/></svg><svg style="position:absolute;left:6px;top:16px" width="11" height="11"><use href="#chk"/></svg><svg style="position:absolute;left:44px;top:16px" width="11" height="11"><use href="#minus"/></svg><svg style="position:absolute;left:59px;top:14px" width="14" height="14"><use href="#oper"/></svg><div class="t" style="left:78px;top:11.074999999999942px;font-size:10px;color:#5a5a5a;font-weight:normal;transform:scaleX(0.8000);">Sklapanje - Korpus - Podsklop</div><div class="t" style="left:210px;top:11.074999999999942px;font-size:10px;color:#5a5a5a;font-weight:normal;transform:scaleX(0.8000);">Korpus - Pods...</div><div class="t" style="left:277px;top:11.074999999999942px;font-size:10px;color:#3a8ac6;font-weight:normal;transform:scaleX(0.8171);">In Work</div><svg style="position:absolute;left:409px;top:13px" width="14" height="16"><use href="#prod"/></svg><div class="t" style="left:426px;top:11.074999999999942px;font-size:10px;color:#3a8ac6;font-weight:normal;transform:scaleX(0.8000);">Podsklop - Korpus A.1</div><svg style="position:absolute;left:6px;top:41px" width="11" height="11"><use href="#chk"/></svg><div style="position:absolute;left:62px;top:34px;width:1px;height:12px;background:#cfcfcf"></div><div style="position:absolute;left:62px;top:46px;width:6px;height:1px;background:#cfcfcf"></div><svg style="position:absolute;left:73px;top:39px" width="14" height="14"><use href="#hour"/></svg><div class="t" style="left:93px;top:35.72499999999998px;font-size:10px;color:#5a5a5a;font-weight:normal;transform:scaleX(0.8000);">Potrebne Komponente</div><div class="t" style="left:210px;top:35.72499999999998px;font-size:10px;color:#5a5a5a;font-weight:normal;transform:scaleX(0.8000);">Ptrebne Komp...</div><div class="t" style="left:277px;top:35.72499999999998px;font-size:10px;color:#3a8ac6;font-weight:normal;transform:scaleX(0.8171);">In Work</div><svg style="position:absolute;left:409px;top:38px" width="14" height="16"><use href="#cube"/></svg><div class="t" style="left:426px;top:35.72499999999998px;font-size:10px;color:#3a8ac6;font-weight:normal;transform:scaleX(0.8000);">front(front)</div><svg style="position:absolute;left:6px;top:65px" width="11" height="11"><use href="#chk"/></svg><svg style="position:absolute;left:44px;top:65px" width="11" height="11"><use href="#minus"/></svg><svg style="position:absolute;left:59px;top:64px" width="14" height="14"><use href="#oper"/></svg><div class="t" style="left:78px;top:60.37499999999996px;font-size:10px;color:#5a5a5a;font-weight:normal;transform:scaleX(0.8000);">Sklapanje Vrata Lozista Komplet</div><div class="t" style="left:210px;top:60.37499999999996px;font-size:10px;color:#5a5a5a;font-weight:normal;transform:scaleX(0.8000);">Vrata Lozista ...</div><div class="t" style="left:277px;top:60.37499999999996px;font-size:10px;color:#3a8ac6;font-weight:normal;transform:scaleX(0.8171);">In Work</div><svg style="position:absolute;left:409px;top:63px" width="14" height="16"><use href="#prod"/></svg><div class="t" style="left:426px;top:60.37499999999996px;font-size:10px;color:#3a8ac6;font-weight:normal;transform:scaleX(0.8000);">Vrata Lozista Komplet A.1</div><svg style="position:absolute;left:6px;top:90px" width="11" height="11"><use href="#chk"/></svg><div style="position:absolute;left:62px;top:83px;width:1px;height:12px;background:#cfcfcf"></div><div style="position:absolute;left:62px;top:95px;width:6px;height:1px;background:#cfcfcf"></div><svg style="position:absolute;left:73px;top:88px" width="14" height="14"><use href="#hour"/></svg><div class="t" style="left:93px;top:85.02500000000005px;font-size:10px;color:#5a5a5a;font-weight:normal;transform:scaleX(0.8000);">Potrebne Komponente</div><div class="t" style="left:210px;top:85.02500000000005px;font-size:10px;color:#5a5a5a;font-weight:normal;transform:scaleX(0.8000);">Potrebne Kom...</div><div class="t" style="left:277px;top:85.02500000000005px;font-size:10px;color:#3a8ac6;font-weight:normal;transform:scaleX(0.8171);">In Work</div><svg style="position:absolute;left:409px;top:87px" width="14" height="16"><use href="#cube"/></svg><div class="t" style="left:426px;top:85.02500000000005px;font-size:10px;color:#3a8ac6;font-weight:normal;transform:scaleX(0.8000);">sarka za vrata(sarka za vrata)</div><svg style="position:absolute;left:6px;top:114px" width="11" height="11"><use href="#chk"/></svg><svg style="position:absolute;left:44px;top:114px" width="11" height="11"><use href="#minus"/></svg><svg style="position:absolute;left:59px;top:113px" width="14" height="14"><use href="#oper"/></svg><div class="t" style="left:78px;top:109.67500000000003px;font-size:10px;color:#5a5a5a;font-weight:normal;transform:scaleX(0.8000);">Gornja Ploca Komplet</div><div class="t" style="left:210px;top:109.67500000000003px;font-size:10px;color:#5a5a5a;font-weight:normal;transform:scaleX(0.8000);">Gornja Ploca ...</div><div class="t" style="left:277px;top:109.67500000000003px;font-size:10px;color:#3a8ac6;font-weight:normal;transform:scaleX(0.8171);">In Work</div><svg style="position:absolute;left:409px;top:112px" width="14" height="16"><use href="#prod"/></svg><div class="t" style="left:426px;top:109.67500000000003px;font-size:10px;color:#3a8ac6;font-weight:normal;transform:scaleX(0.8000);">Gornja Ploca Komplet A.1</div><svg style="position:absolute;left:6px;top:139px" width="11" height="11"><use href="#chk"/></svg><div style="position:absolute;left:62px;top:132px;width:1px;height:12px;background:#cfcfcf"></div><div style="position:absolute;left:62px;top:145px;width:6px;height:1px;background:#cfcfcf"></div><svg style="position:absolute;left:73px;top:138px" width="14" height="14"><use href="#hour"/></svg><div class="t" style="left:93px;top:134.325px;font-size:10px;color:#5a5a5a;font-weight:normal;transform:scaleX(0.8000);">Potrebne Komponente</div><div class="t" style="left:210px;top:134.325px;font-size:10px;color:#5a5a5a;font-weight:normal;transform:scaleX(0.8000);">Potrebne Kom...</div><div class="t" style="left:277px;top:134.325px;font-size:10px;color:#3a8ac6;font-weight:normal;transform:scaleX(0.8171);">In Work</div><svg style="position:absolute;left:409px;top:137px" width="14" height="16"><use href="#cube"/></svg><div class="t" style="left:426px;top:134.325px;font-size:10px;color:#3a8ac6;font-weight:normal;transform:scaleX(0.8000);">007400204 gornja srednja ploca(0074...</div><svg style="position:absolute;left:6px;top:164px" width="11" height="11"><use href="#chk"/></svg><svg style="position:absolute;left:29px;top:164px" width="11" height="11"><use href="#minus"/></svg><svg style="position:absolute;left:44px;top:160px" width="14" height="16"><use href="#circ"/></svg><div class="t" style="left:64px;top:158.97499999999997px;font-size:10px;color:#5a5a5a;font-weight:normal;transform:scaleX(0.8000);">Proizvodnja Delova</div><div class="t" style="left:277px;top:158.97499999999997px;font-size:10px;color:#3a8ac6;font-weight:normal;transform:scaleX(0.8171);">In Work</div><svg style="position:absolute;left:409px;top:161px" width="14" height="16"><use href="#prod"/></svg><div class="t" style="left:426px;top:158.97499999999997px;font-size:10px;color:#3a8ac6;font-weight:normal;transform:scaleX(0.8000);">Carobna Pec - Proizvodnja Limova A.1</div><svg style="position:absolute;left:6px;top:188px" width="11" height="11"><use href="#chk"/></svg><svg style="position:absolute;left:44px;top:188px" width="11" height="11"><use href="#minus"/></svg><svg style="position:absolute;left:59px;top:187px" width="14" height="14"><use href="#oper"/></svg><div class="t" style="left:78px;top:183.62499999999994px;font-size:10px;color:#5a5a5a;font-weight:normal;transform:scaleX(0.8000);">Dno Peci</div><div class="t" style="left:210px;top:183.62499999999994px;font-size:10px;color:#5a5a5a;font-weight:normal;transform:scaleX(0.8000);">Operacija 1.0</div><div class="t" style="left:277px;top:183.62499999999994px;font-size:10px;color:#3a8ac6;font-weight:normal;transform:scaleX(0.8171);">In Work</div><svg style="position:absolute;left:409px;top:186px" width="14" height="16"><use href="#cube"/></svg><div class="t" style="left:426px;top:183.62499999999994px;font-size:10px;color:#3a8ac6;font-weight:normal;transform:scaleX(0.8000);">patos(patos)</div><svg style="position:absolute;left:6px;top:213px" width="11" height="11"><use href="#chk"/></svg><svg style="position:absolute;left:59px;top:213px" width="11" height="11"><use href="#plus"/></svg><svg style="position:absolute;left:74px;top:212px" width="14" height="14"><use href="#oper"/></svg><div class="t" style="left:93px;top:208.27500000000003px;font-size:10px;color:#5a5a5a;font-weight:normal;transform:scaleX(0.8000);">Sečenje - Makaze Auto...</div><div class="t" style="left:210px;top:208.27500000000003px;font-size:10px;color:#5a5a5a;font-weight:normal;transform:scaleX(0.8000);">Makaze Auto..0</div><div class="t" style="left:277px;top:208.27500000000003px;font-size:10px;color:#3a8ac6;font-weight:normal;transform:scaleX(0.8171);">In Work</div><svg style="position:absolute;left:409px;top:211px" width="14" height="16"><use href="#cube"/></svg><div class="t" style="left:426px;top:208.27500000000003px;font-size:10px;color:#3a8ac6;font-weight:normal;transform:scaleX(0.8000);">patos(patos)</div><div style="position:absolute;left:22px;top:107px;width:573px;height:1px;background:#6aa6d2"></div><div style="position:absolute;left:22px;top:131px;width:573px;height:1px;background:#6aa6d2"></div><div style="position:absolute;left:22px;top:107px;width:1px;height:25px;background:#6aa6d2"></div><svg style="position:absolute;left:57px;top:108px;" width="5" height="5" viewBox="0 0 5 5"><path d="M0 5 L0 0 L5 0Z" fill="#3b8fd0"/></svg><div style="position:absolute;left:594px;top:0px;width:12px;height:228px;background:#f0f0f0"></div><div style="position:absolute;left:595px;top:0px;width:9px;height:86px;background:#c5c5c5"></div><div style="position:absolute;left:22px;top:220px;width:573px;height:8px;background:#f2f2f2"></div><div style="position:absolute;left:33px;top:220px;width:231px;height:8px;background:#c2c2c2"></div><svg style="position:absolute;left:24px;top:221px;" width="4" height="6" viewBox="0 0 4 6"><path d="M3.5 0.5 L0.5 3 L3.5 5.5Z" fill="#999"/></svg><svg style="position:absolute;left:586px;top:222px;" width="5" height="7" viewBox="0 0 5 7"><path d="M1 0.5 L4.5 3.5 L1 6.5Z" fill="#333"/></svg><div style="position:absolute;left:594px;top:217px;width:12px;height:11px;background:#dedede"></div><div style="position:absolute;left:573px;top:176px;width:28px;height:28px;border-radius:50%;background:#fff;box-shadow:0 0 3px rgba(0,0,0,.25)"></div><svg style="position:absolute;left:577px;top:183px;" width="20" height="14" viewBox="0 0 20 14"><path d="M3 10 C3 4 8 2 11 2 C15 2 17 5 17 10 L19 11.5 L3 11.5Z" fill="#f6f6f6" stroke="#555" stroke-width="1"/><path d="M7 7 h1 M9.5 7 h1 M12 7 h1" stroke="#555" stroke-width="1"/></svg><svg style="position:absolute;left:578px;top:210px" width="12" height="11"><use href="#mach"/></svg><svg style="position:absolute;left:597px;top:211px;" width="6" height="4" viewBox="0 0 6 4"><path d="M0 0 H6 L3 4Z" fill="#333"/></svg></div><div style="position:absolute;left:421px;top:413px;width:619px;height:241px;border:6px solid #ef0b12;box-sizing:border-box"></div><div style="position:absolute;left:392px;top:654px;width:241px;height:17px;background:#e4e4e4;border-top:1px solid #d8d8d8;box-sizing:border-box"></div><div style="position:absolute;left:392px;top:654px;width:48px;height:17px;background:#a9cce2"></div><div class="t" style="left:398px;top:653.0px;font-size:10px;color:#4d5f6d;font-weight:normal;transform:scaleX(0.8643);">Authoring</div><div class="t" style="left:447px;top:653.0px;font-size:10px;color:#555;font-weight:normal;transform:scaleX(0.7968);">Lifecycle</div><div class="t" style="left:498px;top:653.0px;font-size:10px;color:#555;font-weight:normal;transform:scaleX(0.7909);">View</div><div class="t" style="left:540px;top:653.0px;font-size:10px;color:#555;font-weight:normal;transform:scaleX(0.8139);">Tools</div><div class="t" style="left:578px;top:653.0px;font-size:10px;color:#555;font-weight:normal;transform:scaleX(0.8070);">Configuration</div><svg style="position:absolute;left:635px;top:655px;" width="14" height="12" viewBox="0 0 14 12"><path d="M7 11 L1.5 5 C0 3 1.5 0.8 3.8 0.8 C5.5 0.8 6.5 2 7 3 C7.5 2 8.5 0.8 10.2 0.8 C12.5 0.8 14 3 12.5 5Z" fill="#fff" stroke="#bbb" stroke-width="1"/></svg><div style="position:absolute;left:252px;top:671px;width:538px;height:37px;background:#e9e9e9;border:1px solid #d6d6d6;box-sizing:border-box"></div><div style="position:absolute;left:253px;top:672px;width:119px;height:34px;background:#f7f7f7"></div><div style="position:absolute;left:372px;top:671px;width:1px;height:36px;background:#c8c8c8"></div><svg style="position:absolute;left:255px;top:677px;" width="22" height="26" viewBox="0 0 22 26"><ellipse cx="11" cy="4" rx="6.5" ry="2.5" fill="#ddd" stroke="#777"/><path d="M4.5 4 V15 C4.5 18 17.5 18 17.5 15 V4" fill="#d8d8d8" stroke="#777"/><path d="M4.5 8 C4.5 10.5 17.5 10.5 17.5 8 M4.5 11.5 C4.5 14 17.5 14 17.5 11.5" fill="none" stroke="#777"/><path d="M1 16 H21 V24 H1Z" fill="#2b6c98"/><path d="M1 16 H21 V18 H1Z" fill="#e6e6e6"/></svg><svg style="position:absolute;left:284px;top:679px;" width="20" height="22" viewBox="0 0 20 22"><path d="M3 10 A7 7 0 0 1 16 6 M17 12 A7 7 0 0 1 4 16" fill="none" stroke="#bdbdbd" stroke-width="3.2"/><path d="M13 2 L19 6 L13 9Z M7 13 L1 16 L7 20Z" fill="#bdbdbd"/></svg><svg style="position:absolute;left:313px;top:679px;" width="20" height="20" viewBox="0 0 20 20"><path d="M1 10 C5 3 15 3 19 10 C15 17 5 17 1 10Z" fill="none" stroke="#bdbdbd" stroke-width="1.5"/><circle cx="10" cy="10" r="3.5" fill="#b5b5b5"/><path d="M2 18 L18 2" stroke="#777" stroke-width="1.6"/></svg><svg style="position:absolute;left:335px;top:688px;" width="6" height="4" viewBox="0 0 6 4"><path d="M0 0 H6 L3 4Z" fill="#222"/></svg><div style="position:absolute;left:346px;top:677px;width:25px;height:27px;background:#bcd7ef;border:1px solid #8dbbe2;box-sizing:border-box;border-radius:2px"></div><svg style="position:absolute;left:348px;top:679px;" width="22" height="23" viewBox="0 0 22 23"><path d="M1 2 L6 0.5 L10 2 V8 L6 9.5 L1 8Z" fill="#3a8fc4" stroke="#1f5f8a" stroke-width="0.6"/><rect x="2" y="12" width="10" height="9" fill="#f4f4f4" stroke="#888" stroke-width="0.8"/><circle cx="16" cy="15.5" r="4.8" fill="#fff" stroke="#555"/><circle cx="16" cy="15.5" r="2.4" fill="#333"/></svg><svg style="position:absolute;left:378px;top:677px;" width="22" height="24" viewBox="0 0 22 24"><path d="M2 4 L10 1 L20 4 V18 L10 23 L2 18Z" fill="#f1f1f1" stroke="#555" stroke-width="1.1"/><path d="M8 4 L14 1.5 L20 4 V13 L14 16 L8 13Z" fill="#3d97cd" stroke="#1c5c86" stroke-width="0.7"/><path d="M8 4 L14 6.5 L20 4 L14 1.5Z" fill="#9bd3ef"/><path d="M2 18 L10 23 L20 18 L12 15Z" fill="#ccc"/></svg><svg style="position:absolute;left:400px;top:688px;" width="6" height="4" viewBox="0 0 6 4"><path d="M0 0 H6 L3 4Z" fill="#222"/></svg><svg style="position:absolute;left:413px;top:679px;" width="21" height="21" viewBox="0 0 21 21"><rect x="0.5" y="0.5" width="20" height="20" fill="#f3f3f3" stroke="#999"/><path d="M3 4 H8 M7 8 H13 M10 12 H17 M4 15 H9 M8 17.5 H16" stroke="#2f7fb5" stroke-width="2"/></svg><svg style="position:absolute;left:436px;top:688px;" width="6" height="4" viewBox="0 0 6 4"><path d="M0 0 H6 L3 4Z" fill="#222"/></svg><svg style="position:absolute;left:449px;top:678px;" width="22" height="23" viewBox="0 0 22 23"><path d="M11 1 L21 11.5 L11 22 L1 11.5Z" fill="#fff" stroke="#666" stroke-width="1.2"/><path d="M8 8 H14 L11 11.5 L14 15 H8 L11 11.5Z" fill="#8fa4b2" stroke="#56636d" stroke-width="0.7"/></svg><svg style="position:absolute;left:472px;top:688px;" width="6" height="4" viewBox="0 0 6 4"><path d="M0 0 H6 L3 4Z" fill="#222"/></svg><svg style="position:absolute;left:486px;top:678px;" width="22" height="24" viewBox="0 0 22 24"><rect x="1" y="3" width="16" height="20" fill="#eef3f8" stroke="#666"/><path d="M3 8 H15 M3 11 H15 M3 14 H15 M3 17 H15" stroke="#9cb8d0" stroke-width="0.8"/><path d="M2 2 H16" stroke="#333" stroke-width="2" stroke-dasharray="1 1"/><path d="M20 3 L9 19 L8 22 L11 20 L21.5 5Z" fill="#ddd" stroke="#555" stroke-width="0.9"/></svg><svg style="position:absolute;left:509px;top:688px;" width="6" height="4" viewBox="0 0 6 4"><path d="M0 0 H6 L3 4Z" fill="#222"/></svg><svg style="position:absolute;left:521px;top:678px;" width="22" height="23" viewBox="0 0 22 23"><path d="M11 1 L21 11.5 L11 22 L1 11.5Z" fill="#fff" stroke="#333" stroke-width="1.5"/><path d="M5 11 L11 5 L13 7 L7 13Z M8 14 L14 8 L17 11 L11 17Z" fill="#2f4b5c"/></svg><svg style="position:absolute;left:545px;top:688px;" width="6" height="4" viewBox="0 0 6 4"><path d="M0 0 H6 L3 4Z" fill="#222"/></svg><svg style="position:absolute;left:556px;top:679px;" width="22" height="22" viewBox="0 0 22 22"><path d="M1 3 L5 1 L9 3 V8 L5 10 L1 8Z" fill="#3d97cd" stroke="#1c5c86" stroke-width="0.7"/><path d="M12 12 L16 10 L20 12 V17 L16 19 L12 17Z" fill="#3d97cd" stroke="#1c5c86" stroke-width="0.7"/><path d="M5 10 V14 H12" fill="none" stroke="#222" stroke-width="1.3"/><path d="M1 3 L5 5 L9 3 L5 1Z M12 12 L16 14 L20 12 L16 10Z" fill="#9bd3ef"/></svg><svg style="position:absolute;left:586px;top:679px;" width="22" height="22" viewBox="0 0 22 22"><ellipse cx="8" cy="3.5" rx="6" ry="2.3" fill="#e5e5e5" stroke="#bbb"/><path d="M2 3.5 V14 C2 16.5 14 16.5 14 14 V3.5" fill="#e0e0e0" stroke="#bbb"/><circle cx="13" cy="13" r="4.5" fill="#eee" stroke="#aaa" stroke-width="1.3"/><path d="M16 16 L21 21" stroke="#aaa" stroke-width="2"/></svg><svg style="position:absolute;left:609px;top:688px;" width="6" height="4" viewBox="0 0 6 4"><path d="M0 0 H6 L3 4Z" fill="#222"/></svg><svg style="position:absolute;left:621px;top:679px;" width="22" height="22" viewBox="0 0 22 22"><path d="M2 1 H14 V4 H2Z M3 5 H13 V8 H3Z M3 9 H13 V12 H3Z M3 13 H13 V16 H3Z" fill="#eee" stroke="#bbb" stroke-width="0.9"/><path d="M12 13 L20 21 M20 13 L12 21" stroke="#aaa" stroke-width="2.2"/></svg><svg style="position:absolute;left:650px;top:680px;" width="21" height="19" viewBox="0 0 21 19"><path d="M2 5 H17 V9" fill="none" stroke="#2f7fb5" stroke-width="2.5"/><path d="M6 0.5 L1 5 L6 9.5Z" fill="#2f7fb5"/><path d="M19 15 H3 V11" fill="none" stroke="#333" stroke-width="2.5"/><path d="M15 10.5 L20 15 L15 19.5Z" fill="#333"/></svg><svg style="position:absolute;left:677px;top:678px;" width="22" height="24" viewBox="0 0 22 24"><path d="M6 1 L11 6 L6 11 L1 6Z" fill="#fff" stroke="#555" stroke-width="1"/><circle cx="17" cy="4" r="3" fill="#3d97cd"/><path d="M9 13 L16 9 L21 12 V19 L16 22 L11 19Z" fill="#3d97cd" stroke="#555" stroke-width="0.9"/><path d="M2 14 L7 19" stroke="#111" stroke-width="1.5"/><path d="M4 19 H8 V15Z" fill="#111"/></svg><svg style="position:absolute;left:707px;top:681px;" width="18" height="17" viewBox="0 0 18 17"><rect x="0.5" y="0.5" width="17" height="16" fill="#f2f2f2" stroke="#aaa"/><rect x="3" y="3" width="12" height="4" fill="#ccc" stroke="#999" stroke-width="0.6"/><rect x="3" y="9" width="12" height="5" fill="#bbb" stroke="#999" stroke-width="0.6"/></svg><svg style="position:absolute;left:734px;top:680px;" width="20" height="20" viewBox="0 0 20 20"><circle cx="6.5" cy="6.5" r="4.5" fill="none" stroke="#c6c6c6" stroke-width="3"/><circle cx="13.5" cy="13.5" r="4.5" fill="none" stroke="#c6c6c6" stroke-width="3"/></svg><svg style="position:absolute;left:763px;top:680px;" width="19" height="20" viewBox="0 0 19 20"><rect x="0.5" y="0.5" width="18" height="19" fill="#f2f2f2" stroke="#aaa"/><rect x="3" y="3" width="4" height="3.5" fill="#ccc" stroke="#888" stroke-width="0.6"/><rect x="3" y="8.5" width="4" height="3.5" fill="#ccc" stroke="#888" stroke-width="0.6"/><rect x="3" y="14" width="4" height="3.5" fill="#ccc" stroke="#888" stroke-width="0.6"/><path d="M9 5 H16 M9 10 H16 M9 15.5 H16" stroke="#888" stroke-width="0.8"/></svg><div style="position:absolute;left:1041px;top:63px;width:239px;height:654px;background:#fff"></div><div style="position:absolute;left:1041px;top:62px;width:239px;height:1px;background:#dcdcdc"></div><div style="position:absolute;left:1041px;top:716px;width:239px;height:1px;background:#dcdcdc"></div><div style="position:absolute;left:1048px;top:75px;width:12px;height:13px;background:#f2c12e"></div><svg style="position:absolute;left:1048px;top:75px;" width="12" height="13" viewBox="3 3 24 26"><path d="M11.6 5.6 L18.2 6.2 C19.8 7.2 17 10.5 12.8 13.8 M7.3 16.7 L14.3 16.9 C15.8 18.5 11.5 24.5 5.3 26.7 C6 23.5 7.8 20.5 9.3 18.7 M24.4 13.3 L18.2 13.5 C16.3 14.3 17.5 16 20.3 17.8 C24 20.5 22.5 23.5 14.7 24" fill="none" stroke="#fff" stroke-width="1.8" stroke-linecap="round" stroke-linejoin="round"/></svg><div class="t" style="left:1067px;top:71.0px;font-size:11px;color:#686868;font-weight:normal;transform:scaleX(0.8310);-webkit-text-stroke:0.3px #686868">3D Viewer</div><div style="position:absolute;left:1199px;top:78px;width:10px;height:2px;background:#555"></div><svg style="position:absolute;left:1226px;top:72px;" width="13" height="14" viewBox="0 0 13 14"><path d="M0.8 4 V0.8 H4 M9 0.8 H12.2 V4 M12.2 10 V13.2 H9 M4 13.2 H0.8 V10" fill="none" stroke="#555" stroke-width="1.6"/></svg><svg style="position:absolute;left:1257px;top:77px;" width="10" height="6" viewBox="0 0 10 6"><path d="M1 1 L5 5 L9 1" fill="none" stroke="#666" stroke-width="1.2"/></svg><div style="position:absolute;left:1049px;top:97px;width:227px;height:618px;background:linear-gradient(to bottom,#f5ece7 0px,#f8f1ed 90px,#fcf8f6 150px,#ffffff 190px,#ffffff 100%)"></div><svg style="position:absolute;left:0;top:0" width="1280" height="720" viewBox="0 0 1280 720">
<path d="M1137 495 L1190 458 L1222 471 C1229 474 1230 480 1225 483 L1170 514 C1165 517 1160 518 1156 516Z" fill="#e0555a" stroke="#a83a3e" stroke-width="0.6"/>
<path d="M1096 336 L1144 352 L1144 492 L1098 467Z" fill="#434446" stroke="#111" stroke-width="1"/>
<path d="M1137 350 L1144 352 L1144 492 L1138 490Z" fill="#2f3032"/>
<path d="M1144 352 L1151 352 L1151 492 L1144 492Z" fill="#b4b4b4" stroke="#222" stroke-width="0.7"/>
<path d="M1151 352 L1192 336 L1191 465 L1151 492Z" fill="#3b3c3e" stroke="#111" stroke-width="1"/>
<path d="M1155 368 L1188 354 L1188 376 L1155 390Z" fill="#d8893b"/>
<path d="M1151 352 L1192 337 L1192 352 L1151 367Z" fill="#c8353a" stroke="#3a0a0a" stroke-width="0.8"/>
<path d="M1158 362 L1164 360 M1170 357 L1176 355 M1181 353 L1187 351" stroke="#3a0a0a" stroke-width="1.5"/>
<path d="M1151 445 L1190 432 L1190 462 L1151 484Z" fill="#4a4a4a"/>
<path d="M1152 458 L1168 447 L1190 457 L1190 463 L1152 484Z" fill="#858585"/>
<path d="M1154 466 L1172 454 M1154 473 L1180 457 M1157 480 L1186 461" stroke="#2b2b2b" stroke-width="2.2"/>
<path d="M1151 484 L1190 462 L1190 468 L1151 492Z" fill="#333"/>
<path d="M1094 328 L1150 306 L1196 325 L1152 347Z" fill="#4a4b4e" stroke="#111" stroke-width="1"/>
<path d="M1094 328 L1150 306 L1157 309 L1102 331Z M1152 347 L1196 325 L1196 331 L1152 353Z M1094 328 L1152 347 L1152 353 L1094 337Z M1143 308 L1196 325 L1189 328 L1136 311Z" fill="#c9353b" stroke="#5a1214" stroke-width="0.7"/>
<path d="M1100 333 L1104 334 M1110 336 L1114 337 M1120 339 L1124 340 M1130 342 L1134 343 M1160 311 L1164 312 M1170 314 L1174 315 M1180 318 L1184 319" stroke="#3a0a0a" stroke-width="1.3"/>
<path d="M1146 325 L1172 316 L1172 334Z" fill="#58595c" stroke="#222" stroke-width="0.8"/>
<path d="M1125 312 L1125 320 C1125 325 1143 325 1143 320 L1143 312Z" fill="#bdbdbd" stroke="#333" stroke-width="0.8"/>
<ellipse cx="1134" cy="312" rx="9" ry="4" fill="#d0d0d0" stroke="#333" stroke-width="0.8"/>
<path d="M1153 372 L1207 366 L1207 432 L1155 440Z" fill="#262729" stroke="#000" stroke-width="1.2"/>
<path d="M1162.5 382 L1201 378 L1201 400 L1163 405Z" fill="#dadada" stroke="#111" stroke-width="0.8"/>
<path d="M1192 398 L1196 397.5" stroke="#111" stroke-width="1.5"/>
<path d="M1156 414 L1205 408" stroke="#555" stroke-width="1"/>
<circle cx="1181" cy="427" r="5.5" fill="#1a1a1a" stroke="#555" stroke-width="0.8"/>
<path d="M1208 397 C1214 402 1217 418 1213 429" fill="none" stroke="#1b1b1b" stroke-width="3.2" stroke-linecap="round"/>
</svg><div style="position:absolute;left:1111px;top:634px;width:88px;height:18px;background:#e6e6e6;border:1px solid #d0d0d0;border-bottom:none;box-sizing:border-box"></div><div style="position:absolute;left:1112px;top:635px;width:43px;height:17px;background:#a9cce2"></div><div class="t" style="left:1125px;top:634.0px;font-size:10px;color:#4d5f6d;font-weight:normal;transform:scaleX(0.7909);">View</div><div class="t" style="left:1167px;top:634.0px;font-size:10px;color:#555;font-weight:normal;transform:scaleX(0.8139);">Tools</div><svg style="position:absolute;left:1201px;top:637px;" width="14" height="12" viewBox="0 0 14 12"><path d="M7 11 L1.5 5 C0 3 1.5 0.8 3.8 0.8 C5.5 0.8 6.5 2 7 3 C7.5 2 8.5 0.8 10.2 0.8 C12.5 0.8 14 3 12.5 5Z" fill="#fff" stroke="#bbb" stroke-width="1"/></svg><div style="position:absolute;left:1049px;top:651px;width:228px;height:38px;background:#e8e8e8;border:1px solid #d5d5d5;box-sizing:border-box"></div><div style="position:absolute;left:1050px;top:652px;width:20px;height:36px;background:#f4f4f4"></div><div style="position:absolute;left:1070px;top:652px;width:2px;height:36px;background:#bdbdbd"></div><div style="position:absolute;left:1256px;top:652px;width:20px;height:36px;background:#f4f4f4"></div><div style="position:absolute;left:1254px;top:652px;width:2px;height:36px;background:#bdbdbd"></div><svg style="position:absolute;left:1051px;top:658px;" width="16" height="24" viewBox="0 0 16 24"><path d="M13 1.5 L2 12 L13 22.5 L14.5 20.5 L6 12 L14.5 3.5Z" fill="#fff" stroke="#c4c4c4" stroke-width="1"/></svg><svg style="position:absolute;left:1258px;top:658px;" width="16" height="24" viewBox="0 0 16 24"><path d="M3 1.5 L14 12 L3 22.5 L1.5 20.5 L10 12 L1.5 3.5Z" fill="#fff" stroke="#c4c4c4" stroke-width="1"/></svg><div style="position:absolute;left:1253px;top:640px;width:1px;height:12px;background:#333"></div><div class="t" style="left:1250px;top:624.5px;font-size:11px;color:#222;font-weight:normal;transform:scaleX(1.0909);">y</div><svg style="position:absolute;left:1078px;top:659px;" width="20" height="20" viewBox="0 0 20 20"><circle cx="12" cy="8" r="6.5" fill="#fff" stroke="#333" stroke-width="1.4"/><circle cx="12" cy="8" r="3" fill="none" stroke="#555" stroke-dasharray="1.5 1.5"/><path d="M7.5 12.5 L2 18" stroke="#2f7fb5" stroke-width="2.8" stroke-linecap="round"/></svg><svg style="position:absolute;left:1106px;top:660px;" width="20" height="22" viewBox="0 0 20 22"><path d="M2 5 L10 1.5 L18 5 V16 L10 20 L2 16Z" fill="#2f86bf" stroke="#1d5a85"/><path d="M2 5 L10 8.5 L18 5 L10 1.5Z" fill="#8fd0f0"/><path d="M10 8.5 V20 L18 16 V5Z" fill="#1f6c9e"/></svg><svg style="position:absolute;left:1130px;top:672px;" width="6" height="4" viewBox="0 0 6 4"><path d="M0 0 H6 L3 4Z" fill="#222"/></svg><svg style="position:absolute;left:1142px;top:660px;" width="20" height="20" viewBox="0 0 20 20"><path d="M10 1 L13.5 5 H11.5 V8.5 H15 V6.5 L19 10 L15 13.5 V11.5 H11.5 V15 H13.5 L10 19 L6.5 15 H8.5 V11.5 H5 V13.5 L1 10 L5 6.5 V8.5 H8.5 V5 H6.5Z" fill="#4ea6d6" stroke="#1d5a85" stroke-width="0.8"/></svg><svg style="position:absolute;left:1169px;top:661px;" width="20" height="20" viewBox="0 0 20 20"><path d="M2 5 C5 2 10 3 13 6" fill="none" stroke="#333" stroke-width="1.3"/><circle cx="13" cy="13" r="6" fill="#2f86bf" stroke="#1d5a85"/><path d="M4 6 L11 11" stroke="#fff" stroke-width="2"/></svg><svg style="position:absolute;left:1198px;top:660px;" width="22" height="20" viewBox="0 0 22 20"><circle cx="13" cy="8" r="6.5" fill="#e8f1f7" stroke="#333" stroke-width="1.3"/><path d="M8.5 12.5 L3 18" stroke="#2f7fb5" stroke-width="2.8" stroke-linecap="round"/><path d="M3 1 V11 M1 3 L3 1 L5 3 M1 9 L3 11 L5 9" fill="none" stroke="#111" stroke-width="1.2"/></svg><svg style="position:absolute;left:1228px;top:660px;" width="20" height="22" viewBox="0 0 20 22"><path d="M10 1 L18.5 6 V16 L10 21 L1.5 16 V6Z" fill="#fff" stroke="#333" stroke-width="1.2"/><path d="M6 8 L10 6 L14 8 V13 L10 15 L6 13Z" fill="#4ea6d6" stroke="#1d5a85" stroke-width="0.7"/><path d="M1.5 6 L6 8 M18.5 6 L14 8 M10 21 V15 M10 1 V6" stroke="#555" stroke-width="0.7"/></svg><svg style="position:absolute;left:1249px;top:672px;" width="6" height="4" viewBox="0 0 6 4"><path d="M0 0 H6 L3 4Z" fill="#222"/></svg><div style="position:absolute;left:1049px;top:689px;width:228px;height:19px;background:#f0f0f0"></div><div style="position:absolute;left:1075px;top:689px;width:1px;height:19px;background:#dedede"></div><div style="position:absolute;left:1115px;top:689px;width:1px;height:19px;background:#dedede"></div><div style="position:absolute;left:1162px;top:689px;width:1px;height:19px;background:#dedede"></div><div style="position:absolute;left:1254px;top:689px;width:1px;height:19px;background:#dedede"></div><svg style="position:absolute;left:1057px;top:692px;" width="13" height="13" viewBox="0 0 13 13"><path d="M1 1 L1 9 L3 7 L5 10 L6 9.5 L4.5 6.5 L7 6.5Z" fill="#222"/><rect x="7" y="7.5" width="4" height="4" fill="#fff" stroke="#222" stroke-width="0.9"/></svg><svg style="position:absolute;left:1081px;top:693px;" width="11" height="10" viewBox="0 0 11 10"><path d="M1 5 L4 8.5 L10 1" fill="none" stroke="#222" stroke-width="1.6"/></svg><div style="position:absolute;left:1099px;top:694px;width:2px;height:10px;background:#3a2a2a"></div><div style="position:absolute;left:1104px;top:694px;width:2px;height:10px;background:#3a2a2a"></div><svg style="position:absolute;left:1260px;top:693px;" width="11" height="12" viewBox="0 0 11 12"><path d="M3 2 C5 0.5 7 1 8 3 L9 7 L10.5 9.5 L4 10.5 C3 11 2 10 2.5 9 L3 7 C2 5 2 3.5 3 2Z" fill="none" stroke="#3b8fd0" stroke-width="1.1"/></svg><svg style="position:absolute;left:395px;top:331px;" width="673" height="86" viewBox="0 0 673 86"><path d="M15 1 L658 1 L671 42 L658 85 L14 85 L1 42Z" fill="#04598c"/></svg><div class="t" style="left:459px;top:344.5px;font-size:25px;color:#ffffff;font-weight:normal;transform:scaleX(1.1406);top:342px;height:24px;line-height:24px;-webkit-text-stroke:0.5px #04598c">Proizvodni proces sa radnim instrukcijama,</div><div class="t" style="left:425px;top:375.5px;font-size:25px;color:#ffffff;font-weight:normal;transform:scaleX(1.1452);top:373px;height:24px;line-height:24px;-webkit-text-stroke:0.5px #04598c">angažovanim resursima, ciklusnim vremenima...</div>
</body></html>
